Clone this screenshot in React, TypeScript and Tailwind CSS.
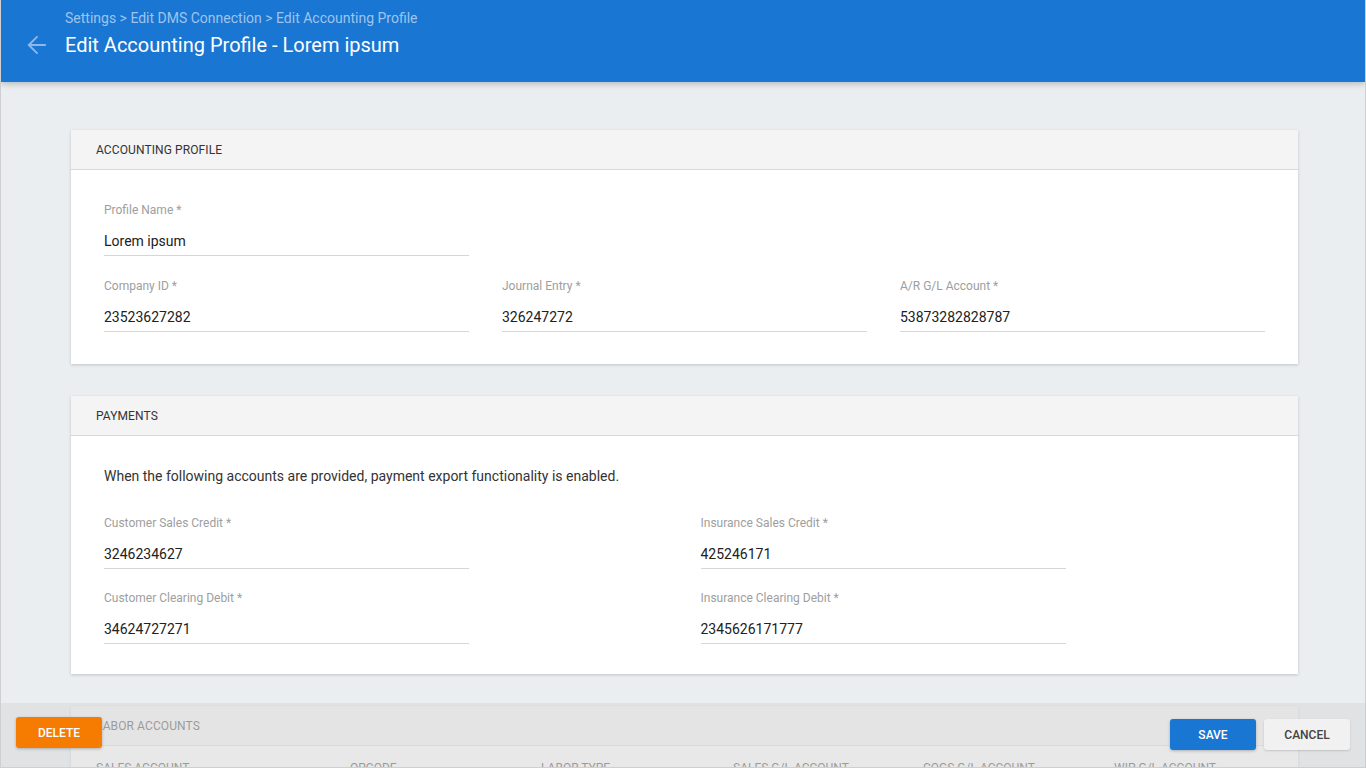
import { ArrowLeft } from 'lucide-react';

const profileFields = [
  { label: 'Company ID *', value: '23523627282' },
  { label: 'Journal Entry *', value: '326247272' },
  { label: 'A/R G/L Account *', value: '53873282828787' },
];

const paymentFields = [
  { label: 'Customer Sales Credit *', value: '3246234627' },
  { label: 'Insurance Sales Credit *', value: '425246171' },
  { label: 'Customer Clearing Debit *', value: '34624727271' },
  { label: 'Insurance Clearing Debit *', value: '2345626171777' },
];

const laborColumns = [
  { name: 'SALES ACCOUNT', width: 'w-[254px]' },
  { name: 'OPCODE', width: 'w-[191px]' },
  { name: 'LABOR TYPE', width: 'w-[192px]' },
  { name: 'SALES G/L ACCOUNT', width: 'w-[190px]' },
  { name: 'COGS G/L ACCOUNT', width: 'w-[191px]' },
  { name: 'WIP G/L ACCOUNT', width: 'w-[150px]' },
];

function Field({ label, value, className = '' }: { label: string; value: string; className?: string }) {
  return (
    <div className={className}>
      <div className="text-[12px] leading-[16px] text-[#9e9e9e]">{label}</div>
      <div className="mt-[13px] pb-[4px] border-b border-[#d6d6d6] text-[14px] leading-[20px] text-[#212121]">
        {value}
      </div>
    </div>
  );
}

function Card({ title, children }: { title: string; children: React.ReactNode }) {
  return (
    <section className="bg-white shadow-[0_1px_3px_rgba(0,0,0,0.18)]">
      <div className="h-[40px] flex items-center px-[25px] bg-[#f4f4f4] border-b border-[#d9d9d9] text-[12px] text-[#333333] tracking-[0.1px]">
        {title}
      </div>
      {children}
    </section>
  );
}

export default function App() {
  return (
    <div
      className="relative h-screen overflow-hidden border border-t-0 border-[#cfcfcf] bg-[#eaeef1] flex flex-col"
      style={{ fontFamily: 'Roboto, "Liberation Sans", sans-serif' }}
    >
      <header className="relative z-10 h-[82px] shrink-0 bg-[#1976d2] shadow-[0_2px_6px_rgba(0,0,0,0.22)]">
        <div className="flex">
          <div className="w-[64px] pt-[31px] pl-[22px]">
            <ArrowLeft className="w-[28px] h-[28px] text-[#8cb8ec]" strokeWidth={1.6} />
          </div>
          <div className="pt-[9px]">
            <div className="text-[14px] leading-[18px] text-[#9ec4ee]">
              Settings &gt; Edit DMS Connection &gt; Edit Accounting Profile
            </div>
            <h1 className="mt-[5px] text-[20px] leading-[26px] font-normal text-white">
              Edit Accounting Profile - Lorem ipsum
            </h1>
          </div>
        </div>
      </header>

      <main className="flex-1 overflow-hidden pl-[70px] pr-[67px] pt-[48px] flex flex-col gap-[32px]">
        <Card title="ACCOUNTING PROFILE">
          <div className="px-[33px] pt-[32px] pb-[32px]">
            <div className="grid grid-cols-3 gap-x-[33px]">
              <Field label="Profile Name *" value="Lorem ipsum" />
            </div>
            <div className="grid grid-cols-3 gap-x-[33px] mt-[22px]">
              {profileFields.map((f) => (
                <Field key={f.label} label={f.label} value={f.value} />
              ))}
            </div>
          </div>
        </Card>

        <Card title="PAYMENTS">
          <div className="px-[33px] pt-[30px] pb-[30px]">
            <p className="text-[14px] leading-[20px] text-[#333333]">
              When the following accounts are provided, payment export functionality is enabled.
            </p>
            <div className="grid grid-cols-2 gap-x-[32px] gap-y-[21px] mt-[29px]">
              {paymentFields.map((f) => (
                <Field key={f.label} label={f.label} value={f.value} className="w-[365px]" />
              ))}
            </div>
          </div>
        </Card>

        <Card title="LABOR ACCOUNTS">
          <div className="flex px-[25px] pt-[13px] text-[12px] text-[#333333]">
            {laborColumns.map((c) => (
              <div key={c.name} className={c.width}>
                {c.name}
              </div>
            ))}
          </div>
          <div className="h-[80px]" />
        </Card>
      </main>

      <div className="absolute left-0 right-0 bottom-0 z-20 h-[64px] bg-[rgba(218,218,218,0.62)] flex justify-between px-[15px]">
        <button className="mt-[14px] h-[31px] w-[86px] rounded-[3px] bg-[#f57c00] text-white text-[12px] font-medium shadow-[0_1px_3px_rgba(0,0,0,0.25)]">
          DELETE
        </button>
        <div className="flex gap-[8px] mt-[16px]">
          <button className="h-[31px] w-[86px] rounded-[3px] bg-[#1976d2] text-white text-[12px] font-medium shadow-[0_1px_3px_rgba(0,0,0,0.25)]">
            SAVE
          </button>
          <button className="h-[31px] w-[86px] rounded-[3px] bg-[#f1f1f1] text-[#424242] text-[12px] font-medium shadow-[0_1px_2px_rgba(0,0,0,0.15)]">
            CANCEL
          </button>
        </div>
      </div>
    </div>
  );
}
